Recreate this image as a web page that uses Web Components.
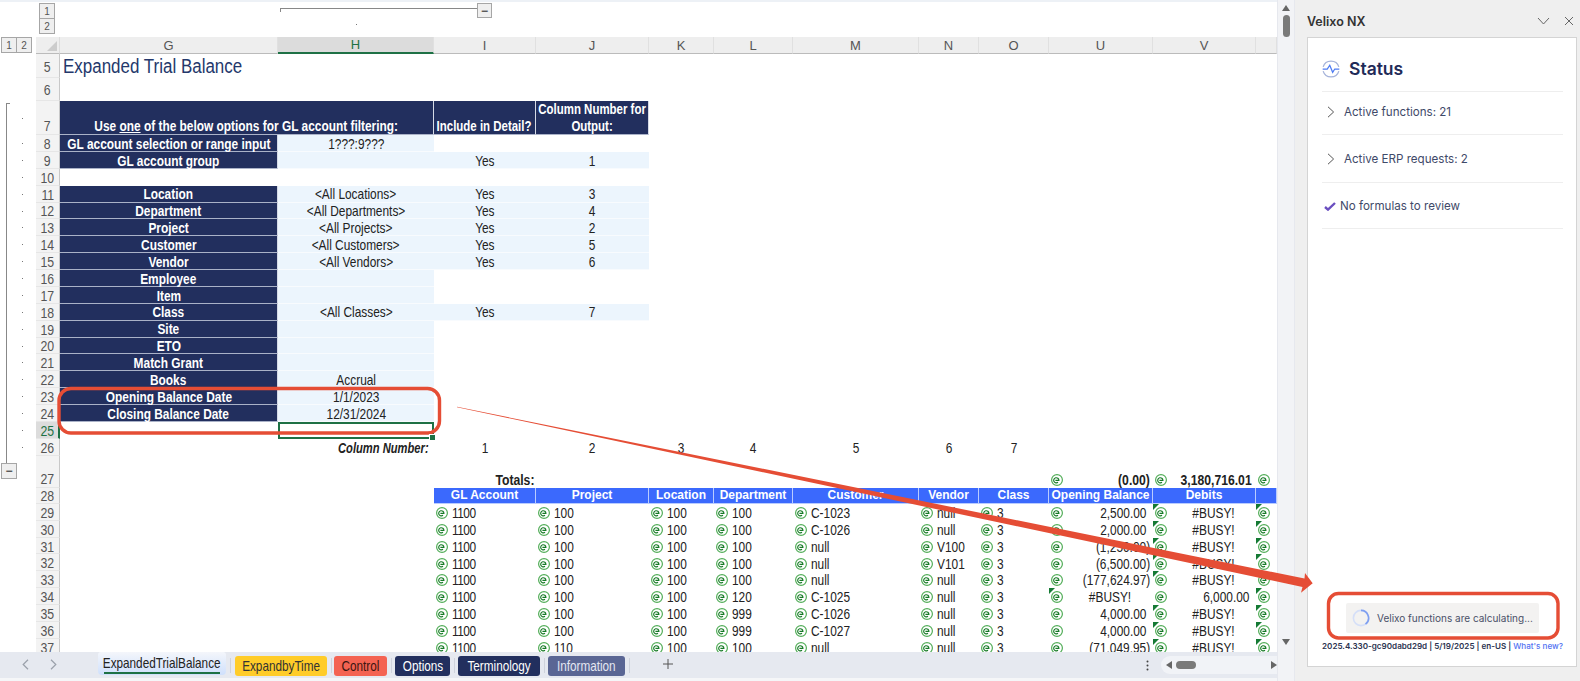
<!DOCTYPE html>
<html>
<head>
<meta charset="utf-8">
<title>Expanded Trial Balance</title>
<style>
    html, body { margin: 0; padding: 0; background: #fff; overflow: hidden; }
</style>
</head>
<body>
<app-shell>
    <outline-top slot="sheet"></outline-top>
    <div slot="sheet" style="display:flex;flex:1;min-height:0;overflow:hidden">
        <outline-left></outline-left>
        <sheet-grid></sheet-grid>
    </div>
    <sheet-tabs slot="sheet">
        <sheet-tab tone="active" w="128">ExpandedTrialBalance</sheet-tab>
        <sheet-tab tone="yellow" w="92" gap="7">ExpandbyTime</sheet-tab>
        <sheet-tab tone="red" w="53">Control</sheet-tab>
        <sheet-tab tone="navy" w="55">Options</sheet-tab>
        <sheet-tab tone="navy" w="82">Terminology</sheet-tab>
        <sheet-tab tone="slate" w="77">Information</sheet-tab>
    </sheet-tabs>
    <v-scrollbar slot="scroll"></v-scrollbar>
    <task-pane slot="pane" heading="Velixo NX">
        <pane-row kind="expand" h="43" pb="3">Active functions: 21</pane-row>
        <pane-row kind="expand" h="47.5">Active ERP requests: 2</pane-row>
        <pane-row kind="check" h="46">No formulas to review</pane-row>
    </task-pane>
    <callout-overlay slot="overlay"></callout-overlay>
</app-shell>

<script>
// no narrow font is installed, so the sheet text is squeezed sideways with scaleX
const SHEET_FONT = `"Liberation Sans", Arial, sans-serif`;

class AppShell extends HTMLElement {
    constructor() {
        super();
        this.attachShadow({ mode: "open" });
        this.shadowRoot.innerHTML = `
            <style>
                :host { display: flex; position: relative; width: 1580px; height: 681px; overflow: hidden; background: #fff; }
                .book { width: 1277px; flex: none; display: flex; flex-direction: column; height: 100%; }
            </style>
            <div class="book"><slot name="sheet"></slot></div>
            <slot name="scroll"></slot>
            <slot name="pane"></slot>
            <slot name="overlay"></slot>
        `;
    }
}

// small grey outline level button
const levelBtn = `
    .btn { box-sizing: border-box; display: flex; align-items: center; justify-content: center; background: #efefef;
           border: 1px solid #a6a6a6; color: #555; font: 10px "Liberation Sans", sans-serif; }
`;

class OutlineTop extends HTMLElement {
    constructor() {
        super();
        this.attachShadow({ mode: "open" });
        this.shadowRoot.innerHTML = `
            <style>
                :host { display: block; flex: none; position: relative; height: 37px; box-sizing: border-box; border-top: 2px solid #edf1f6; }
                ${levelBtn}
                .levels { position: absolute; left: 39px; top: 1px; width: 16px; }
                .levels .btn { height: 16px; margin-bottom: -1px; }
                .line { position: absolute; left: 280px; top: 6px; width: 197px; height: 4px; box-sizing: border-box;
                        border-top: 1px solid #888; border-left: 1px solid #888; }
                .minus { position: absolute; left: 477px; top: 1px; width: 15px; height: 15px; font-weight: bold; font-size: 12px; }
                .dot { position: absolute; left: 356px; top: 22px; width: 1px; height: 1px; background: #777; }
            </style>
            <div class="levels"><div class="btn">1</div><div class="btn">2</div></div>
            <div class="line"></div>
            <div class="btn minus">&minus;</div>
            <div class="dot"></div>
        `;
    }
}

class OutlineLeft extends HTMLElement {
    constructor() {
        super();
        this.attachShadow({ mode: "open" });
        const dots = [];
        for (let r = 7; r <= 26; r++) {
            const y = r === 7 ? 118 : 135 + (r - 8) * 16.88 + 8;
            dots.push(`<i style="top:${y - 37}px"></i>`);
        }
        this.shadowRoot.innerHTML = `
            <style>
                :host { display: block; position: relative; width: 36px; flex: none; }
                ${levelBtn}
                .levels { display: flex; position: absolute; left: 1px; top: 0; }
                .levels .btn { width: 16px; height: 16px; margin-right: -1px; }
                .line { position: absolute; left: 6px; top: 66px; width: 4px; height: 360px; box-sizing: border-box;
                        border-left: 1px solid #888; border-top: 1px solid #888; }
                .minus { position: absolute; left: 1px; top: 426px; width: 16px; height: 16px; font-weight: bold; font-size: 12px; }
                i { position: absolute; left: 22px; width: 1px; height: 1px; background: #777; }
            </style>
            <div class="levels"><div class="btn">1</div><div class="btn">2</div></div>
            <div class="line"></div>
            ${dots.join("")}
            <div class="btn minus">&minus;</div>
        `;
    }
}

class FnMark extends HTMLElement {
    constructor() {
        super();
        this.attachShadow({ mode: "open" });
        this.shadowRoot.innerHTML = `
            <style>:host { display: block; width: 12px; height: 12px; flex: none; } svg { display: block; }</style>
            <svg width="12" height="12" viewBox="0 0 12 12" fill="none">
                <circle cx="6" cy="6" r="5.4" stroke="#52ad58" stroke-width="1.2"/>
                <path d="M4.4 6.3H7.9A2.6 2.6 0 1 0 7 8.3" stroke="#167a26" stroke-width="1.15"/>
            </svg>
        `;
    }
}

class SheetGrid extends HTMLElement {
    constructor() {
        super();
        this.attachShadow({ mode: "open" });
        const cols = ["G", "H", "I", "J", "K", "L", "M", "N", "O", "U", "V", ""];
        const mark = "<fn-mark></fn-mark>";
        const t = (s, cls) => `<span class="t ${cls || ""}">${s}</span>`;
        const rows = [];
        const add = (num, cells, cls) => rows.push(`<div class="rh ${cls || ""}">${t(num)}</div>` + cells.join(""));
        const empty = n => Array(n).fill(`<div class="c"></div>`);

        // column letters
        rows.push(`<div class="corner"></div>` + cols.map(c => `<div class="ch ${c === "H" ? "sel" : ""}">${c}</div>`).join(""));
        add(5, [`<div class="c title">${t("Expanded Trial Balance")}</div>`, ...empty(11)]);
        add(6, empty(12));
        add(7, [
            `<div class="c d b" style="grid-column:span 2;align-items:flex-end">${t("Use <u>one</u> of the below options for GL account filtering:")}</div>`,
            `<div class="c d b" style="align-items:flex-end">${t("Include in Detail?", "head")}</div>`,
            `<div class="c d b wrap">${t("Column Number for<br>Output:", "head")}</div>`,
            ...empty(8)
        ], "bt");

        // rows 8-25: label, value, include, column number
        const top = [
            [8, "GL account selection or range input", "1???:9???"],
            [9, "GL account group", "", "Yes", "1"],
            [10],
            [11, "Location", "&lt;All Locations&gt;", "Yes", "3"],
            [12, "Department", "&lt;All Departments&gt;", "Yes", "4"],
            [13, "Project", "&lt;All Projects&gt;", "Yes", "2"],
            [14, "Customer", "&lt;All Customers&gt;", "Yes", "5"],
            [15, "Vendor", "&lt;All Vendors&gt;", "Yes", "6"],
            [16, "Employee", ""],
            [17, "Item", ""],
            [18, "Class", "&lt;All Classes&gt;", "Yes", "7"],
            [19, "Site", ""],
            [20, "ETO", ""],
            [21, "Match Grant", ""],
            [22, "Books", "Accrual"],
            [23, "Opening Balance Date", "1/1/2023"],
            [24, "Closing Balance Date", "12/31/2024"]
        ];
        top.forEach(([n, label, val, inc, num]) => {
            if (label === undefined) { add(n, empty(12)); return; }
            const light = s => `<div class="c l">${t(s)}</div>`;
            add(n, [
                `<div class="c d b">${t(label)}</div>`,
                light(val),
                inc ? light(inc) : `<div class="c"></div>`,
                num ? light(num) : `<div class="c"></div>`,
                ...empty(8)
            ]);
        });
        add(25, [`<div class="c"></div>`, `<div class="c picked"><i></i></div>`, ...empty(10)], "sel");
        add(26, [
            `<div class="c"></div>`,
            `<div class="c r b it">${t("Column Number:", "tight")}</div>`,
            ...["1", "2", "3", "4", "5", "6", "7"].map(n => `<div class="c">${t(n)}</div>`),
            ...empty(3)
        ]);

        // totals and the table header
        add(27, [
            ...empty(2),
            `<div class="c r b end">${t("Totals:", "wide")}</div>`,
            ...empty(6),
            `<div class="c fn end b"><div class="amt neg">${mark}${t("(0.00)", "wide")}</div></div>`,
            `<div class="c fn end b"><div class="amt pos">${mark}${t("3,180,716.01", "wide")}</div></div>`,
            `<div class="c fn end">${mark}</div>`
        ], "bt");
        const heads = ["GL Account", "Project", "Location", "Department", "Customer", "Vendor", "Class", "Opening Balance", "Debits", ""];
        add(28, [...empty(2), ...heads.map(h => `<div class="c th">${h}</div>`)]);

        // detail rows
        const data = [
            ["100", "100", "C-1023", "null", "2,500.00"],
            ["100", "100", "C-1026", "null", "2,000.00"],
            ["100", "100", "null", "V100", "(1,250.00)"],
            ["100", "100", "null", "V101", "(6,500.00)"],
            ["100", "100", "null", "null", "(177,624.97)"],
            ["100", "120", "C-1025", "null", "#BUSY!"],
            ["100", "999", "C-1026", "null", "4,000.00"],
            ["100", "999", "C-1027", "null", "4,000.00"],
            ["110", "100", "null", "null", "(71,049.95)"]
        ];
        const fn = s => `<div class="c fn">${mark}${t(s)}</div>`;
        const flag = `<b class="flag"></b>`;
        const busy = `<div class="c fn">${flag}${mark}${t("#BUSY!", "busy")}</div>`;
        data.forEach((d, i) => {
            const busyU = d[4] === "#BUSY!";
            const u = busyU ? busy
                : `<div class="c fn"><div class="amt ${d[4][0] === "(" ? "neg" : "posd"}">${mark}${t(d[4])}</div></div>`;
            const v = busyU
                ? `<div class="c fn"><div class="amt posd">${mark}${t("6,000.00")}</div></div>`
                : busy;
            add(29 + i, [
                ...empty(2),
                `<div class="c fn">${mark}${t("1100", "ones")}</div>`,
                fn(d[0]), fn("100"), fn(d[1]), fn(d[2]), fn(d[3]), fn("3"),
                u, v,
                `<div class="c fn">${flag}${mark}</div>`
            ]);
        });

        this.shadowRoot.innerHTML = `
            <style>
                :host { display: block; flex: 1; min-width: 0; font: 14.5px ${SHEET_FONT}; color: #222; }
                .g {
                    display: grid;
                    grid-template-columns: 24px 218px 156px 102px 113px 65px 79px 126px 60px 70px 104px 103px 21px;
                    grid-template-rows: 17px 24px 23px 34px repeat(19, 16.88px) 32.28px 16px repeat(9, 16.85px);
                }
                .t { display: inline-block; transform: scaleX(.82); transform-origin: center; white-space: nowrap; }
                .t.tight { transform: scaleX(.77); }
                .t.head { transform: scaleX(.79); }
                .t.wide { transform: scaleX(.84); }
                .t.ones { letter-spacing: -.6px; }
                .corner { background: #eee; position: relative; border-right: 1px solid #ddd; border-bottom: 1px solid #bbb; box-sizing: border-box; }
                .corner::after { content: ""; position: absolute; right: 2px; bottom: 2px; border: 5px solid transparent; border-right-color: #ccc; border-bottom-color: #ccc; }
                .ch { box-sizing: border-box; background: #eee; color: #555; display: flex; align-items: center; justify-content: center;
                      border-right: 1px solid #e0e0e0; border-bottom: 1px solid #bbb; font-size: 13px; }
                .ch.sel { background: #dcdcdc; color: #1e7145; border-bottom: 2px solid #1e7145; }
                .rh { box-sizing: border-box; background: #f3f3f3; color: #555; display: flex; align-items: center; justify-content: center;
                      padding-top: 1px; border-right: 1px solid #c8c8c8; border-bottom: 1px solid #e6e6e6; font-size: 15px; }
                .rh.bt { align-items: flex-end; }
                .rh.sel { background: #dcdcdc; color: #1e7145; border-right: 2px solid #1e7145; }
                .c { box-sizing: border-box; display: flex; align-items: center; justify-content: center; white-space: nowrap; position: relative; min-width: 0; padding-top: 1.5px; }
                .title { justify-content: flex-start; padding-left: 3px; font-size: 19.5px; color: #24386b; }
                .title .t { transform: scaleX(.87); transform-origin: left; }
                .d { background: #222f5e; color: #fff; border-bottom: 1px solid #aab2c8; border-right: 1px solid #d5dae6; padding-bottom: 0; }
                .wrap { text-align: center; line-height: 17.5px; }
                .b { font-weight: bold; }
                .l { background: #ecf5fd; border-bottom: 1px solid #f8fbfe; }
                .r { justify-content: flex-end; padding-right: 5px; }
                .r .t { transform-origin: right; }
                .end { align-self: end; height: 17px; padding-right: 2px; }
                .fn.end { padding-right: 0; }
                .it { font-style: italic; }
                .picked { border: 2px solid #1e7145; }
                .picked i { position: absolute; right: -4px; bottom: -4px; width: 5px; height: 5px; background: #1e7145; border: 1px solid #fff; z-index: 1; }
                .th { background: #3b69fd; color: #fff; font: bold 12px "Liberation Sans", sans-serif; border-right: 1px solid #b9ccff; border-bottom: 1px solid #b9ccff; padding-top: 0; }
                .fn { justify-content: flex-start; padding-left: 2px; gap: 4px; }
                .fn > .t { transform-origin: left; }
                .fn > .t.busy { flex: 1; text-align: center; transform-origin: center; }
                .amt { display: flex; flex: 1; align-items: center; justify-content: space-between; }
                .amt .t { transform-origin: right; }
                .amt.neg { padding-right: 3px; }
                .amt.pos { padding-right: 6px; }
                .amt.posd { padding-right: 7px; }
                .flag { position: absolute; left: 0; top: 0; width: 0; height: 0; border-top: 6px solid #157a34; border-right: 6px solid transparent; }
            </style>
            <div class="g">${rows.join("")}</div>
        `;
    }
}

class SheetTab extends HTMLElement {
    constructor() {
        super();
        this.attachShadow({ mode: "open" });
        const gap = this.getAttribute("gap") || 8;
        this.shadowRoot.innerHTML = `
            <style>
                :host { display: flex; flex: none; align-items: center; justify-content: center; position: relative; box-sizing: border-box; height: 20px;
                        width: ${this.getAttribute("w")}px; margin: 4px ${gap}px 0 0; border-radius: 3px;
                        font: 14.5px ${SHEET_FONT}; white-space: nowrap; }
                :host::after { content: ""; position: absolute; right: -${Number(gap) / 2 + 1}px; top: 2px; width: 1px; height: 15px; background: #cfd3dc; }
                :host([tone=active]) { height: 23px; margin: 0 9px 0 0; padding-top: 2px; border-radius: 3px 3px 4px 4px; flex-direction: column; color: #222;
                        background: linear-gradient(#f4f6fb, #cfe0fc); }
                :host([tone=active]) .u { display: block; }
                :host([tone=active])::after { top: 6px; right: -5px; }
                :host([tone=yellow]) { background: #ffcc29; color: #333; }
                :host([tone=red]) { background: #f46352; color: #3a1510; }
                :host([tone=navy]) { background: #222f5e; color: #fff; }
                :host([tone=slate]) { background: #5a6694; color: #e4e7f2; }
                .t { display: inline-block; transform: scaleX(.81); }
                .u { display: none; height: 2px; width: 116px; margin-top: 1px; background: #1e7145; }
            </style>
            <span class="t"><slot></slot></span><div class="u"></div>
        `;
    }
}

class SheetTabs extends HTMLElement {
    constructor() {
        super();
        this.attachShadow({ mode: "open" });
        this.shadowRoot.innerHTML = `
            <style>
                :host { display: flex; flex: none; height: 26.3px; border-bottom: 3px solid #f5f6f8; background: #e6e9f0; align-items: flex-start; }
                .nav { width: 98px; flex: none; display: flex; padding: 7px 0 0 22px; gap: 21px; box-sizing: border-box; }
                .tabs { display: flex; flex: none; }
                .plus { margin-left: 29px; padding-top: 6px; }
                .dots { margin-left: auto; padding-top: 8px; margin-right: 12px; }
                .bar { width: 116px; height: 18px; margin-top: 4px; flex: none; background: #f1f3f7; border-radius: 9px 0 0 9px; position: relative; }
                .thumb { position: absolute; left: 15px; top: 5px; width: 20px; height: 8px; background: #7a7a7a; border-radius: 4px; }
                svg { display: block; }
                .la { position: absolute; left: 5px; top: 5px; }
                .ra { position: absolute; right: 0; top: 5px; }
            </style>
            <div class="nav">
                <svg width="7" height="11" viewBox="0 0 7 11" fill="none" stroke="#9aa0aa" stroke-width="1.2"><path d="M6 .8 1.2 5.5 6 10.2"/></svg>
                <svg width="7" height="11" viewBox="0 0 7 11" fill="none" stroke="#9aa0aa" stroke-width="1.2"><path d="M1 .8 5.8 5.5 1 10.2"/></svg>
            </div>
            <div class="tabs"><slot></slot></div>
            <div class="plus"><svg width="12" height="12" viewBox="0 0 12 12" stroke="#555" stroke-width="1"><path d="M6 1V11M1 6H11"/></svg></div>
            <div class="dots"><svg width="3" height="11" viewBox="0 0 3 11" fill="#444"><circle cx="1.5" cy="1.5" r="1"/><circle cx="1.5" cy="5.5" r="1"/><circle cx="1.5" cy="9.5" r="1"/></svg></div>
            <div class="bar">
                <svg class="la" width="6" height="8" viewBox="0 0 6 8" fill="#666"><path d="M6 0V8L0 4Z"/></svg>
                <div class="thumb"></div>
                <svg class="ra" width="6" height="8" viewBox="0 0 6 8" fill="#666"><path d="M0 0V8L6 4Z"/></svg>
            </div>
        `;
    }
}

class VScrollbar extends HTMLElement {
    constructor() {
        super();
        this.attachShadow({ mode: "open" });
        this.shadowRoot.innerHTML = `
            <style>
                :host { display: flex; flex-direction: column; align-items: center; box-sizing: border-box; width: 18px; height: 100%; flex: none;
                        background: #f2f3f6; border-left: 1px solid #e6e8ee; border-right: 1px solid #e6e8ee; padding-top: 5px; }
                .thumb { width: 7px; height: 22px; margin-top: 4px; background: #7a7a7a; border-radius: 4px; }
                svg { display: block; }
                .down { margin-top: 602px; }
            </style>
            <svg width="8" height="6" viewBox="0 0 8 6" fill="#666"><path d="M0 6H8L4 0Z"/></svg>
            <div class="thumb"></div>
            <svg class="down" width="8" height="6" viewBox="0 0 8 6" fill="#666"><path d="M0 0H8L4 6Z"/></svg>
        `;
    }
}

class PaneRow extends HTMLElement {
    constructor() {
        super();
        this.attachShadow({ mode: "open" });
        const kind = this.getAttribute("kind");
        const glyph = kind === "check"
            ? `<svg width="12" height="9" viewBox="0 0 12 9" fill="none" stroke="#6a4fc0" stroke-width="2.4"><path d="M1 5 4 7.6 11 1"/></svg>`
            : `<svg width="8" height="12" viewBox="0 0 8 12" fill="none" stroke="#555" stroke-width="1"><path d="M1 .8 6.6 6 1 11.2"/></svg>`;
        this.shadowRoot.innerHTML = `
            <style>
                :host { display: flex; align-items: center; flex: none; box-sizing: border-box; height: ${this.getAttribute("h")}px;
                        padding-top: 1px; padding-bottom: ${this.getAttribute("pb") || 0}px; border-bottom: 1px solid #eeeeee;
                        font: 11.6px Inter, "Noto Sans", sans-serif; color: #3f4a69; }
                .g { display: flex; justify-content: center; flex: none; }
                :host([kind=expand]) .g { width: 18px; margin-right: 4px; }
                :host([kind=check]) .g { width: 13px; margin-left: 1px; margin-right: 4px; padding-top: 2px; }
            </style>
            <div class="g">${glyph}</div><slot></slot>
        `;
    }
}

class TaskPane extends HTMLElement {
    constructor() {
        super();
        this.attachShadow({ mode: "open" });
        this.shadowRoot.innerHTML = `
            <style>
                :host { display: flex; flex-direction: column; box-sizing: border-box; flex: none; width: 285px; height: 100%; background: #efefef; padding: 0 3px 14px 12px; font-family: Inter, "Noto Sans", sans-serif; }
                .top { height: 37px; flex: none; display: flex; align-items: center; justify-content: space-between; padding: 5px 3px 0 0; box-sizing: border-box; font-size: 12.5px; font-weight: 600; color: #333; }
                .ctl { display: flex; gap: 14px; align-items: center; }
                svg { display: block; flex: none; }
                .card { flex: 1; display: flex; flex-direction: column; background: #fff; border: 1px solid #d4d4d4; padding: 0 13px 13px 14px; box-sizing: border-box; min-height: 0; }
                .head { height: 54px; flex: none; display: flex; align-items: center; gap: 8px; padding: 8px 0 0 0; box-sizing: border-box; border-bottom: 1px solid #eeeeee; font-size: 17.5px; font-weight: 600; color: #1f2b58; }
                .spin { flex: 1; }
                .calc { align-self: center; width: 193px; height: 30px; flex: none; background: #f3f2f1; border-radius: 2px; display: flex; align-items: center; gap: 7px; padding-left: 6px; box-sizing: border-box; font-size: 10px; color: #4a5068; white-space: nowrap; }
                .ver { margin-top: 6px; height: 14px; text-align: center; font-size: 8.1px; font-weight: 600; line-height: 14px; color: #2b3350; white-space: nowrap; }
                .ver a { color: #5272f2; text-decoration: none; font-weight: 500; }
            </style>
            <div class="top">
                <span>${this.getAttribute("heading")}</span>
                <span class="ctl">
                    <svg width="13" height="8" viewBox="0 0 13 8" fill="none" stroke="#666" stroke-width="1"><path d="M1 1 6.5 7 12 1"/></svg>
                    <svg width="10" height="10" viewBox="0 0 10 10" fill="none" stroke="#666" stroke-width="1"><path d="M1 1 9 9M9 1 1 9"/></svg>
                </span>
            </div>
            <div class="card">
                <div class="head">
                    <svg width="20" height="20" viewBox="0 0 24 24" fill="none" stroke-width="1.5" style="margin-left:-1px">
                        <path d="M2.6 9.5A9.8 9.8 0 0 1 21.4 9.5M21.4 14.5A9.8 9.8 0 0 1 2.6 14.5" stroke="#a5b3da"/>
                        <path d="M2 12H7.5L10.5 7.5 14 16 16.5 12H22" stroke="#4d7bf3"/>
                    </svg>
                    <span>Status</span>
                </div>
                <slot></slot>
                <div class="spin"></div>
                <div class="calc">
                    <svg width="18" height="18" viewBox="0 0 18 18" fill="none" stroke-width="1.6">
                        <circle cx="9" cy="9" r="7.6" stroke="#d5dff8"/>
                        <path d="M9 1.4A7.6 7.6 0 0 1 13.5 15.1" stroke="#7f9ff0"/>
                    </svg>
                    <span>Velixo functions are calculating...</span>
                </div>
                <div class="ver">2025.4.330-gc90dabd29d | 5/19/2025 | en-US | <a>What's new?</a></div>
            </div>
        `;
    }
}

class CalloutOverlay extends HTMLElement {
    constructor() {
        super();
        this.attachShadow({ mode: "open" });
        this.shadowRoot.innerHTML = `
            <style>
                :host { position: absolute; left: 0; top: 0; width: 1580px; height: 681px; pointer-events: none; }
                svg { display: block; }
            </style>
            <svg width="1580" height="681" viewBox="0 0 1580 681" fill="none">
                <rect x="59" y="388.5" width="380.5" height="44.5" rx="12" stroke="#e54d35" stroke-width="3.4"/>
                <rect x="1328.5" y="593.5" width="229.5" height="44.5" rx="10" stroke="#e54d35" stroke-width="3.4"/>
                <polygon points="457,406.8 1304.5,578.5 1305,573 1312.7,583.2 1301,592.7 1302.5,587 457,407.2" fill="#e54d35"/>
            </svg>
        `;
    }
}

customElements.define("app-shell", AppShell);
customElements.define("outline-top", OutlineTop);
customElements.define("outline-left", OutlineLeft);
customElements.define("fn-mark", FnMark);
customElements.define("sheet-grid", SheetGrid);
customElements.define("sheet-tab", SheetTab);
customElements.define("sheet-tabs", SheetTabs);
customElements.define("v-scrollbar", VScrollbar);
customElements.define("pane-row", PaneRow);
customElements.define("task-pane", TaskPane);
customElements.define("callout-overlay", CalloutOverlay);
</script>
</body>
</html>
